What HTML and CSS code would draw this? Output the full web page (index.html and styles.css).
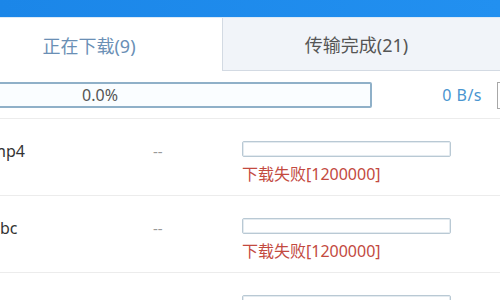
FILE: index.html
```html
<!DOCTYPE html>
<html lang="zh-CN">

<head>
    <meta charset="UTF-8">
    <meta name="viewport" content="width=device-width, initial-scale=1.0">
    <title>下载管理</title>
    <link rel="stylesheet" href="styles.css">
</head>

<body>

    <div class="window">
        <div class="title-bar"></div>

        <div class="tabs">
            <div class="tab tab-active">正在下载(9)</div>
            <div class="tab tab-done">传输完成(21)</div>
        </div>

        <div class="summary">
            <div class="total-bar">0.0%</div>
            <div class="speed">0 B/s</div>
            <div class="summary-btn"></div>
        </div>

        <div class="task-list">
            <div class="task">
                <div class="task-name">mp4</div>
                <div class="task-size">--</div>
                <div class="task-status">
                    <div class="task-bar"></div>
                    <div class="task-error">下载失败[1200000]</div>
                </div>
            </div>
            <div class="task">
                <div class="task-name">abc</div>
                <div class="task-size">--</div>
                <div class="task-status">
                    <div class="task-bar"></div>
                    <div class="task-error">下载失败[1200000]</div>
                </div>
            </div>
            <div class="task">
                <div class="task-name"></div>
                <div class="task-size"></div>
                <div class="task-status">
                    <div class="task-bar"></div>
                </div>
            </div>
        </div>
    </div>

</body>

</html>
```

FILE: styles.css
```css
html,
body {
    margin: 0;
    padding: 0;
    background-color: #fff;
}

body {
    width: 500px;
    height: 300px;
    overflow: hidden;
    font-family: "Noto Sans", "Noto Sans CJK SC", sans-serif;
    color: #333;
}

* {
    box-sizing: border-box;
}

.window {
    width: 500px;
}

.title-bar {
    height: 18px;
    background: linear-gradient(to right, #1b86e8, #2290f0);
    border-bottom: 1px solid #dceaf7;
}

.tabs {
    display: flex;
    height: 53px;
}

.tab {
    display: flex;
    align-items: center;
    justify-content: center;
    font-size: 18px;
}

.tab-active {
    flex: 0 0 266px;
    margin-left: -44px;
    color: #6a8fb5;
    background-color: #fff;
}

.tab-done {
    flex: 1;
    padding-right: 10px;
    color: #555;
    background-color: #f1f4f9;
    border-left: 1px solid #d3dae3;
    border-bottom: 1px solid #d3dae3;
}

.summary {
    display: flex;
    align-items: center;
    height: 47px;
    padding-top: 1px;
}

.total-bar {
    flex: 0 0 544px;
    margin-left: -172px;
    height: 26px;
    line-height: 22px;
    text-align: center;
    font-size: 16px;
    color: #555;
    background-color: #fafdff;
    border: 2px solid #8fb0c8;
    border-radius: 2px;
}

.speed {
    flex: 0 0 110px;
    text-align: right;
    font-size: 16px;
    letter-spacing: 0.5px;
    color: #4a95d0;
}

.summary-btn {
    flex: 0 0 40px;
    margin-left: 15px;
    height: 27px;
    border: 1px solid #a8a8a8;
}

.task {
    display: flex;
    align-items: flex-start;
    height: 77px;
    padding-top: 22px;
    border-top: 1px solid #ececec;
}

.task-name {
    flex: 0 0 162px;
    margin-left: -9px;
    line-height: 20px;
    font-size: 16px;
    color: #333;
}

.task-size {
    flex: 0 0 89px;
    line-height: 20px;
    font-size: 15px;
    color: #999;
}

.task-status {
    flex: 0 0 209px;
}

.task-bar {
    height: 16px;
    border: 1px solid #b9c9d4;
    box-shadow: inset 0 0 0 1px #e4ebf0;
    border-radius: 2px;
}

.task-error {
    margin-top: 7px;
    line-height: 20px;
    font-size: 16px;
    color: #c34a3f;
    white-space: nowrap;
}
```
